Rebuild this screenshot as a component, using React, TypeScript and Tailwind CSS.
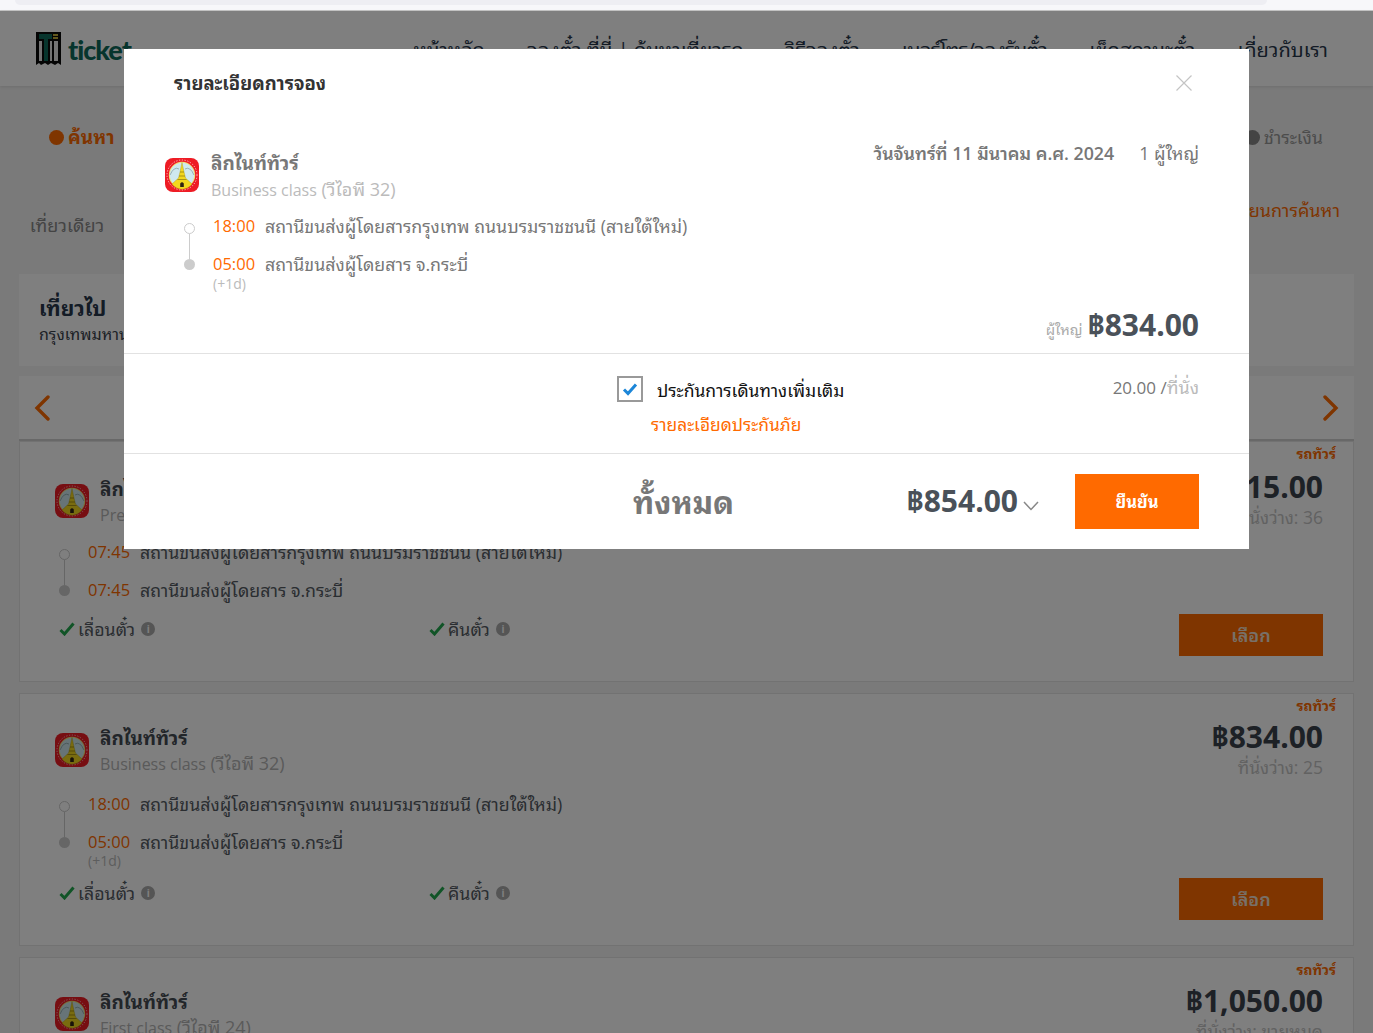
import React from "react";

const font = { fontFamily: '"Open Sans","Noto Sans Thai Looped","Loma","Garuda","Waree","Noto Sans","Noto Sans Thai","Liberation Sans",sans-serif' };

function BusLogo() {
  return (
    <svg width="34" height="34" viewBox="0 0 34 34" className="shrink-0">
      <rect x="0" y="0" width="34" height="34" rx="8" fill="#ee1c25" />
      <circle cx="17" cy="17" r="15" fill="none" stroke="#ffffff" strokeWidth="1" strokeDasharray="1.2 1.6" opacity="0.7" />
      <circle cx="17" cy="17" r="13.2" fill="#f0e27a" />
      <circle cx="17" cy="17" r="12.2" fill="#cfe9ef" />
      <path d="M5 17 Q9 8 14 11 M29 17 Q25 8 20 11" fill="none" stroke="#7f9a9a" strokeWidth="0.7" />
      <path d="M17 4.5 L19 14 L20.5 20 L27 26 A12.2 12.2 0 0 1 7 26 L13.5 20 L15 14Z" fill="#f3d81e" stroke="#a8961a" strokeWidth="0.4" />
      <path d="M15 14H19M14 18H20M12.5 21.5H21.5" stroke="#8a7a10" strokeWidth="0.7" />
      <path d="M15.2 29V25.5Q17 23 18.8 25.5V29Z" fill="#2f2412" />
    </svg>
  );
}

function Timeline({ h = 34 }: { h?: number }) {
  return (
    <div className="flex w-[11px] flex-col items-center">
      <span className="h-[11px] w-[11px] rounded-full border border-[#cccccc] bg-white" />
      <span className="w-px bg-[#cccccc]" style={{ height: h - 9 }} />
      <span className="h-[11px] w-[11px] rounded-full bg-[#cccccc]" />
    </div>
  );
}

function Check({ label, className }: { label: string; className: string }) {
  return (
    <div className={`flex items-center ${className}`}>
      <svg width="16" height="14" viewBox="0 0 16 14">
        <path d="M1.5 8 L5.5 12 L14.5 1.5" fill="none" stroke="#22a94f" strokeWidth="3" />
      </svg>
      <span className="ml-[3px] text-[17.8px] leading-6 text-[#555b63]">{label}</span>
      <span className="ml-[6px] flex h-[14px] w-[14px] items-center justify-center rounded-full bg-[#aaaaaa] text-[10px] font-bold leading-none text-white">i</span>
    </div>
  );
}

function Card({
  cls, thai, t1, t2, plus, first, price, seats, className,
}: { cls: string; thai: string; t1: string; t2: string; plus?: boolean; first?: boolean; price: string; seats: string; className: string }) {
  return (
    <div className={`flex justify-between border border-[#e4e4e4] bg-white ${className}`}>
      <div className={`flex-1 pl-[35px] ${first ? "pt-[35px]" : "pt-[32px]"}`}>
        <div className="flex h-[48px] items-center">
          <BusLogo />
          <div className="ml-[11px] mt-[2px]">
            <div className="text-[19px] font-bold leading-6 text-[#444b53]">ลิกไนท์ทัวร์</div>
            <div className="text-[18px] leading-[26px] text-[#b5b5b5]"><span className="text-[16px]">{cls}</span> {thai}</div>
          </div>
        </div>
        <div className={`flex ${first ? "mt-[8px]" : "mt-[11px]"}`}>
          <div className="ml-[4px] mt-[16px]"><Timeline /></div>
          <div className="ml-[18px]">
            <div className="flex h-[38px] items-center">
              <span className="w-[52px] text-[16.5px] text-[#ff6a00]">{t1}</span>
              <span className="text-[17.8px] text-[#555b63]">สถานีขนส่งผู้โดยสารกรุงเทพ ถนนบรมราชชนนี (สายใต้ใหม่)</span>
            </div>
            <div className="flex h-[38px] items-center">
              <span className="w-[52px] text-[16.5px] text-[#ff6a00]">{t2}</span>
              <span className="text-[17.8px] text-[#555b63]">สถานีขนส่งผู้โดยสาร จ.กระบี่</span>
            </div>
            {plus && <div className="-mt-[7px] h-[19px] text-[14px] leading-[14px] text-[#bbbbbb]">(+1d)</div>}
          </div>
        </div>
        <div className="mt-[8px] flex pl-[4px]">
          <Check label="เลื่อนตั๋ว" className="w-[370px]" />
          <Check label="คืนตั๋ว" className="" />
        </div>
      </div>
      <div className="flex w-[300px] flex-col items-end pr-[30px]">
        <div className="mr-[-13px] mt-[2px] text-[14px] font-bold leading-[20px] text-[#ff6a00]">รถทัวร์</div>
        <div className={`text-[30px] font-bold leading-[40px] text-[#3a424c] ${first ? "mt-[3px]" : "mt-[1px]"}`}>{price}</div>
        <div className="text-[17.5px] leading-[20px] text-[#c4c4c4]">{seats}</div>
        <div className="mb-[25px] mt-auto flex h-[42px] w-[144px] items-center justify-center bg-[#ff6a00] text-[18px] font-semibold text-[#f0e0d0]">เลือก</div>
      </div>
    </div>
  );
}

export default function App() {
  return (
    <div className="relative h-[1033px] w-[1373px] overflow-hidden bg-[#f4f4f4]" style={font}>
      <div className="h-[11px] border-b border-[#c6c6c6] bg-[#f7f7fa] pl-[15px]">
        <div className="h-[5px] w-[1252px] rounded-b-md bg-[#eeeef3]" />
      </div>

      <div className="relative">
        <header className="flex h-[75px] items-center justify-between bg-white pl-[36px] pr-[45px] shadow-[0_1px_3px_rgba(0,0,0,0.1)]">
          <div className="flex items-center">
            <svg width="25" height="34" viewBox="0 0 25 34">
              <path d="M0 0H25V33L22 31L19 33L15 31L12 33L9 31L5 33L3 31L0 33Z" fill="#0b0b0b" />
              <path d="M3 2H16V7H12V29H8V7H3Z" fill="#0e6b5a" />
              <path d="M3 9H6V29H3ZM14 9H16V29H14ZM18 9H22V29H18Z" fill="#e9e9e9" />
              <path d="M17 2H22V4H17ZM17 5H22V7H17Z" fill="#c5b13a" />
            </svg>
            <span className="ml-[7px] mt-[2px] font-['Lato'] text-[27px] font-black leading-none tracking-[-1px] text-[#0e6b5a]">ticket</span>
          </div>
          <nav className="flex gap-[42px] pt-[2px] text-[20px] text-[#27364b]">
            <span>หน้าหลัก</span>
            <span>จองตั๋ว ที่นี่ | ค้นหาเที่ยวรถ</span>
            <span className="tracking-[-0.2px]">วิธีจองตั๋ว</span>
            <span className="tracking-[-0.6px]">เบอร์โทร/จองรับตั๋ว</span>
            <span className="tracking-[0.15px]">เช็คสถานะตั๋ว</span>
            <span>เกี่ยวกับเรา</span>
          </nav>
        </header>

        <div className="flex h-[102px] items-center justify-between pl-[49px] pr-[50px]">
          <div className="flex items-center">
            <span className="h-[15px] w-[15px] rounded-full bg-[#ff6a00]" />
            <span className="ml-[4px] text-[19px] font-bold leading-6 text-[#ff6a00]">ค้นหา</span>
          </div>
          <div className="flex items-center">
            <span className="h-[15px] w-[15px] rounded-full bg-[#888888]" />
            <span className="ml-[4px] text-[18px] leading-6 text-[#999999]">ชำระเงิน</span>
          </div>
        </div>

        <div className="flex h-[86px] items-start justify-between pr-[33px]">
          <div className="mt-[2px] flex h-[70px] w-[124px] items-center justify-center border-r-2 border-[#bbbbbb] pl-[12px] text-[18px] text-[#888888]">เที่ยวเดียว</div>
          <div className="mt-[9px] text-[18px] text-[#ff6a00]">เปลี่ยนการค้นหา</div>
        </div>

        <div className="mx-[19px] h-[92px] bg-white pl-[20px] pt-[19px]">
          <div className="text-[21px] font-bold leading-[30px] text-[#27364b]">เที่ยวไป</div>
          <div className="text-[16px] leading-[22px] text-[#3a424c]">กรุงเทพมหานคร</div>
        </div>

        <div className="mx-[19px] mt-[10px] flex h-[65px] items-center justify-between border-b-2 border-[#d0d0d0] bg-white px-[15px]">
          <svg width="16" height="26" viewBox="0 0 16 26"><path d="M14 2 L3 13 L14 24" fill="none" stroke="#ff6a00" strokeWidth="3.4" strokeLinecap="round" /></svg>
          <svg width="16" height="26" viewBox="0 0 16 26"><path d="M2 2 L13 13 L2 24" fill="none" stroke="#ff6a00" strokeWidth="3.4" strokeLinecap="round" /></svg>
        </div>

        <div className="mx-[19px] flex flex-col gap-[11px]">
          <Card first className="h-[241px]" cls="Premium class" thai="(วีไอพี 24)" t1="07:45" t2="07:45" price="฿1,015.00" seats="ที่นั่งว่าง: 36" />
          <Card className="h-[253px]" cls="Business class" thai="(วีไอพี 32)" t1="18:00" t2="05:00" plus price="฿834.00" seats="ที่นั่งว่าง: 25" />
          <Card className="h-[253px]" cls="First class" thai="(วีไอพี 24)" t1="18:00" t2="05:00" plus price="฿1,050.00" seats="ที่นั่งว่าง: ขายหมด" />
        </div>

        <div className="absolute inset-0 h-[1022px] bg-black/50" />
      </div>

      {/* modal */}
      <div className="absolute left-[124px] top-[49px] flex h-[500px] w-[1125px] flex-col bg-white">
        <div className="flex h-[68px] items-center justify-between pl-[50px] pr-[57px]">
          <div className="text-[18.5px] font-bold leading-6 text-[#333333]">รายละเอียดการจอง</div>
          <svg width="16" height="16" viewBox="0 0 16 16"><path d="M0.5 0.5 L15.5 15.5 M15.5 0.5 L0.5 15.5" stroke="#c4c4c4" strokeWidth="1.2" /></svg>
        </div>

        <div className="flex h-[237px] flex-col border-b border-[#e2e2e2] pl-[41px] pr-[50px]">
          <div className="flex flex-1 justify-between">
            <div>
              <div className="mt-[33px] flex items-start">
                <div className="mt-[8px]"><BusLogo /></div>
                <div className="ml-[12px]">
                  <div className="text-[19px] font-bold leading-[26px] text-[#777777]">ลิกไนท์ทัวร์</div>
                  <div className="text-[18px] leading-[27px] text-[#bbbbbb]"><span className="text-[16px]">Business class</span> (วีไอพี 32)</div>
                </div>
              </div>
              <div className="mt-[10px] flex">
                <div className="ml-[19px] mt-[9px]"><Timeline /></div>
                <div className="ml-[18px]">
                  <div className="flex h-[24px] items-center">
                    <span className="w-[52px] text-[16.5px] text-[#ff6a00]">18:00</span>
                    <span className="text-[17.8px] text-[#777777]">สถานีขนส่งผู้โดยสารกรุงเทพ ถนนบรมราชชนนี (สายใต้ใหม่)</span>
                  </div>
                  <div className="mt-[14px] flex h-[24px] items-center">
                    <span className="w-[52px] text-[16.5px] text-[#ff6a00]">05:00</span>
                    <span className="text-[17.8px] text-[#777777]">สถานีขนส่งผู้โดยสาร จ.กระบี่</span>
                  </div>
                  <div className="text-[14px] leading-[16px] text-[#bbbbbb]">(+1d)</div>
                </div>
              </div>
            </div>
            <div className="mt-[24px] flex h-[24px] items-center text-[17.8px] text-[#777777]">
              <span className="font-semibold">วันจันทร์ที่ 11 มีนาคม ค.ศ. 2024</span>
              <span className="ml-[25px]">1 ผู้ใหญ่</span>
            </div>
          </div>
          <div className="mb-[8px] flex items-end justify-end">
            <span className="mb-[4px] text-[14.5px] text-[#aaaaaa]">ผู้ใหญ่</span>
            <span className="ml-[5px] text-[30px] font-bold leading-[40px] text-[#4a5159]">฿834.00</span>
          </div>
        </div>

        <div className="h-[100px] border-b border-[#e2e2e2]">
          <div className="flex justify-between pl-[493px] pr-[50px] pt-[22px]">
            <div className="flex items-center">
              <span className="flex h-[26px] w-[26px] items-center justify-center border-2 border-[#999999]">
                <svg width="16" height="14" viewBox="0 0 16 14"><path d="M2 7.5 L6 11.5 L14 2.5" fill="none" stroke="#1c86d8" strokeWidth="3" /></svg>
              </span>
              <span className="ml-[14px] mt-[1px] text-[17.5px] leading-6 text-[#111111]">ประกันการเดินทางเพิ่มเติม</span>
            </div>
            <div className="-mt-[1px] text-[17px] leading-6 text-[#777777]">20.00 /<span className="text-[18px] text-[#bbbbbb]">ที่นั่ง</span></div>
          </div>
          <div className="ml-[527px] mt-[10px] text-[17.4px] leading-6 text-[#ff6a00]">รายละเอียดประกันภัย</div>
        </div>

        <div className="flex flex-1 items-center pl-[509px] pr-[50px]">
          <span className="text-[31px] font-bold leading-10 text-[#777777]">ทั้งหมด</span>
          <span className="ml-auto -mt-[2px] text-[30px] font-bold leading-[40px] text-[#4a5159]">฿854.00</span>
          <svg className="ml-[5px] mt-[8px]" width="16" height="10" viewBox="0 0 16 10"><path d="M1 1 L8 8.5 L15 1" fill="none" stroke="#888888" strokeWidth="1.5" /></svg>
          <div className="ml-[36px] flex h-[55px] w-[124px] items-center justify-center bg-[#ff6a00] pt-[2px] text-[16.5px] font-bold text-white">ยืนยัน</div>
        </div>
      </div>
    </div>
  );
}
